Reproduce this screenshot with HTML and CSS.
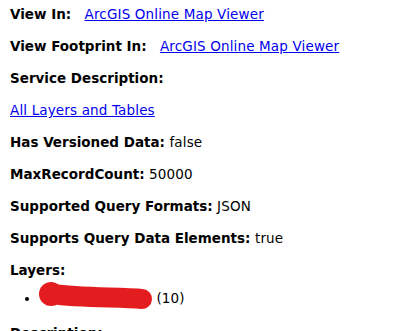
FILE: index.html
```html
<!DOCTYPE html>
<html lang="en">
<head>
  <meta charset="UTF-8">
  <title>Map Service</title>
  <link rel="stylesheet" href="styles.css">
</head>
<body>
  <div class="rest-body">
    <div class="row"><b>View In:</b>&nbsp;&nbsp; <a href="#">ArcGIS Online Map Viewer</a></div>
    <div class="row"><b>View Footprint In:</b>&nbsp;&nbsp; <a href="#">ArcGIS Online Map Viewer</a></div>
    <div class="row"><b>Service Description:</b></div>
    <div class="row"><a href="#">All Layers and Tables</a></div>
    <div class="row"><b>Has Versioned Data:</b> false</div>
    <div class="row"><b>MaxRecordCount:</b> 50000</div>
    <div class="row"><b>Supported Query Formats:</b> JSON</div>
    <div class="row"><b>Supports Query Data Elements:</b> true</div>
    <div class="row layers"><b>Layers:</b></div>
    <ul class="layer-list">
      <li>
        <span class="redact">
          <svg width="114" height="30" viewBox="0 0 114 30">
            <path d="M12 13 C 40 17, 80 16, 102 18" fill="none" stroke="#e31d1f" stroke-width="20" stroke-linecap="round"/>
            <circle cx="11" cy="13" r="12" fill="#e31d1f"/>
          </svg>
        </span> (10)
      </li>
    </ul>
    <div class="row"><b>Description:</b></div>
  </div>
</body>
</html>
```

FILE: styles.css
```css
body {
  margin: 0;
  padding: 6px 10px;
  font-family: 'DejaVu Sans', Verdana, sans-serif;
  font-size: 13.5px;
  line-height: 16px;
  letter-spacing: 0.15px;
  color: #000;
  background: #fff;
}
b {
  letter-spacing: 0;
}
a {
  color: #0000ee;
}
.row {
  margin-bottom: 16px;
}
.row.layers {
  margin-bottom: 12px;
}
.layer-list {
  margin: 0 0 19px 0;
  padding-left: 30px;
}
.redact {
  display: inline-block;
  width: 112px;
  height: 16px;
  vertical-align: top;
}
.redact svg {
  display: block;
  margin-top: -9px;
  overflow: visible;
}
```
